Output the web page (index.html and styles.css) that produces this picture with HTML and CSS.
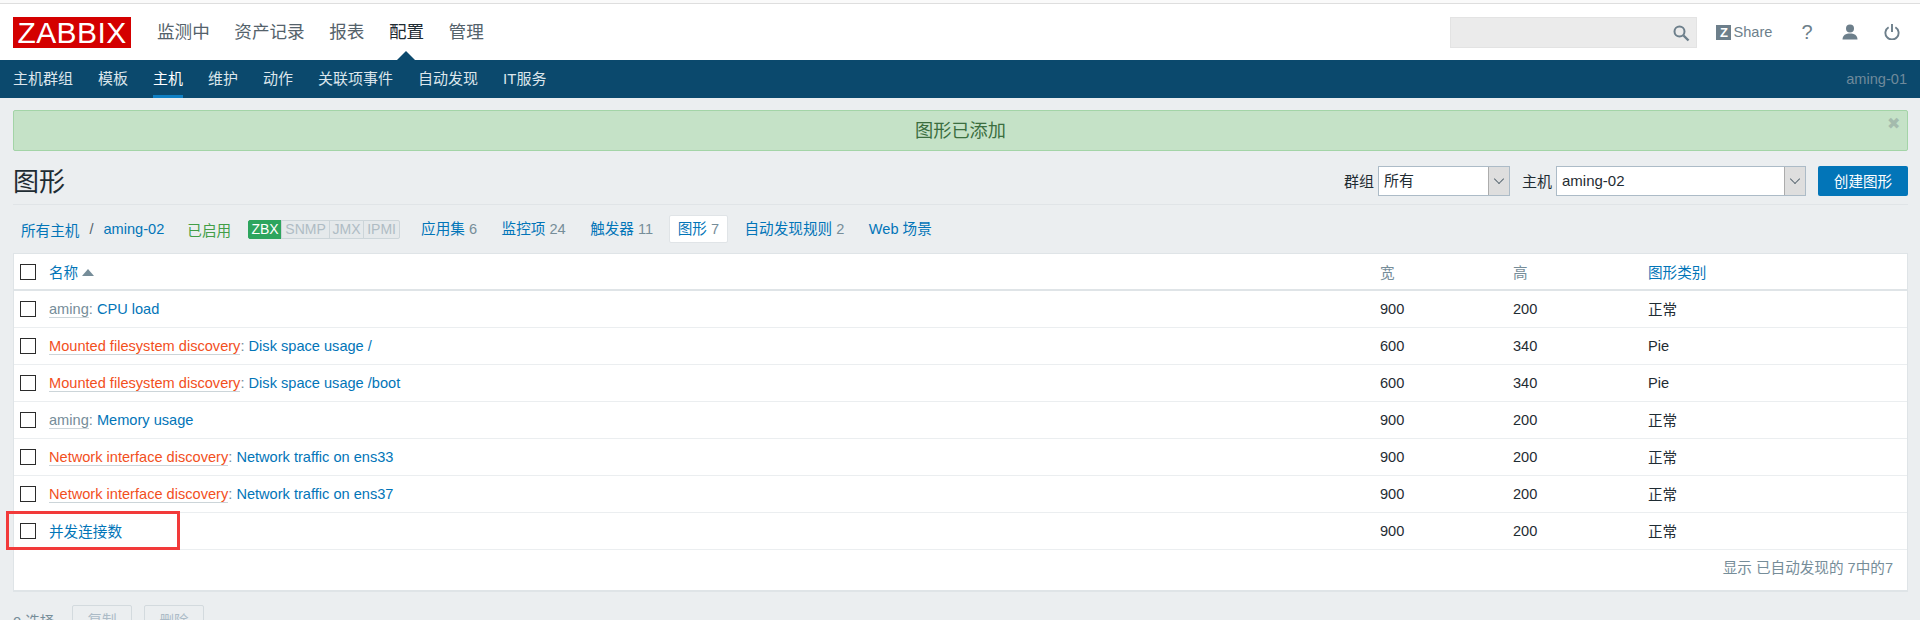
FILE: index.html
```html
<!DOCTYPE html>
<html lang="zh-CN">
<head>
    <meta charset="UTF-8">
    <title>图形</title>
    <link rel="stylesheet" href="styles.css">
</head>
<body>
    <div class="top-strip"></div>

    <!-- Main menu -->
    <header class="header">
        <a href="#" class="logo">ZABBIX</a>
        <nav class="main-nav">
            <a href="#">监测中</a>
            <a href="#">资产记录</a>
            <a href="#">报表</a>
            <a href="#" class="selected">配置</a>
            <a href="#">管理</a>
        </nav>
        <div class="search">
            <svg width="18" height="18" viewBox="0 0 18 18"><circle cx="7.5" cy="7.5" r="5" fill="none" stroke="#6d7f8b" stroke-width="2"/><path d="M11.5 11.5L16.5 16.5" stroke="#6d7f8b" stroke-width="2.4"/></svg>
        </div>
        <a href="#" class="share"><span class="share-z">Z</span>Share</a>
        <a href="#" class="help">?</a>
        <a href="#" class="head-icon">
            <svg width="16" height="16" viewBox="0 0 16 16"><circle cx="8" cy="4.4" r="4" fill="#6d7f8b"/><path d="M0.5 15.5C0.5 11 4 9.4 8 9.4S15.5 11 15.5 15.5Z" fill="#6d7f8b"/></svg>
        </a>
        <a href="#" class="head-icon">
            <svg width="16" height="16" viewBox="0 0 16 16"><path d="M4.6 3.2A6.6 6.6 0 1 0 11.4 3.2" fill="none" stroke="#6d7f8b" stroke-width="1.9"/><path d="M8 0V8" stroke="#6d7f8b" stroke-width="1.9"/></svg>
        </a>
    </header>

    <!-- Sub menu -->
    <nav class="sub-nav">
        <a href="#">主机群组</a>
        <a href="#">模板</a>
        <a href="#" class="selected">主机</a>
        <a href="#">维护</a>
        <a href="#">动作</a>
        <a href="#">关联项事件</a>
        <a href="#">自动发现</a>
        <a href="#">IT服务</a>
        <span class="server-name">aming-01</span>
    </nav>

    <main class="content">
        <div class="msg-good">
            图形已添加
            <span class="msg-close">✖</span>
        </div>

        <div class="title-row">
            <h1>图形</h1>
            <div class="filter">
                <label>群组</label>
                <div class="combo combo-group"><span>所有</span><i class="combo-arrow"></i></div>
                <label>主机</label>
                <div class="combo combo-host"><span>aming-02</span><i class="combo-arrow"></i></div>
                <button class="btn-create">创建图形</button>
            </div>
        </div>

        <!-- Host navigation -->
        <div class="host-nav">
            <a href="#" class="crumb">所有主机</a>
            <span class="crumb-sep">/</span>
            <a href="#" class="crumb">aming-02</a>
            <span class="host-enabled">已启用</span>
            <div class="status-box">
                <span class="on">ZBX</span><span class="s-snmp">SNMP</span><span class="s-jmx">JMX</span><span class="s-ipmi">IPMI</span>
            </div>
            <a href="#" class="host-link">应用集 <em>6</em></a>
            <a href="#" class="host-link">监控项 <em>24</em></a>
            <a href="#" class="host-link">触发器 <em>11</em></a>
            <a href="#" class="host-link current">图形 <em>7</em></a>
            <a href="#" class="host-link">自动发现规则 <em>2</em></a>
            <a href="#" class="host-link">Web 场景</a>
        </div>

        <div class="table-box">
            <table class="list">
                <thead>
                    <tr>
                        <th class="col-check"><i class="check"></i></th>
                        <th class="col-name"><a href="#">名称</a><i class="sort-up"></i></th>
                        <th class="col-w">宽</th>
                        <th class="col-h">高</th>
                        <th><a href="#">图形类别</a></th>
                    </tr>
                </thead>
                <tbody>
                    <tr>
                        <td><i class="check"></i></td>
                        <td><span class="tpl">aming</span><span class="colon">:</span> <a href="#">CPU load</a></td>
                        <td>900</td><td>200</td><td>正常</td>
                    </tr>
                    <tr>
                        <td><i class="check"></i></td>
                        <td><span class="rule">Mounted filesystem discovery</span><span class="colon">:</span> <a href="#">Disk space usage /</a></td>
                        <td>600</td><td>340</td><td>Pie</td>
                    </tr>
                    <tr>
                        <td><i class="check"></i></td>
                        <td><span class="rule">Mounted filesystem discovery</span><span class="colon">:</span> <a href="#">Disk space usage /boot</a></td>
                        <td>600</td><td>340</td><td>Pie</td>
                    </tr>
                    <tr>
                        <td><i class="check"></i></td>
                        <td><span class="tpl">aming</span><span class="colon">:</span> <a href="#">Memory usage</a></td>
                        <td>900</td><td>200</td><td>正常</td>
                    </tr>
                    <tr>
                        <td><i class="check"></i></td>
                        <td><span class="rule">Network interface discovery</span><span class="colon">:</span> <a href="#">Network traffic on ens33</a></td>
                        <td>900</td><td>200</td><td>正常</td>
                    </tr>
                    <tr>
                        <td><i class="check"></i></td>
                        <td><span class="rule">Network interface discovery</span><span class="colon">:</span> <a href="#">Network traffic on ens37</a></td>
                        <td>900</td><td>200</td><td>正常</td>
                    </tr>
                    <tr>
                        <td><i class="check"></i></td>
                        <td><a href="#">并发连接数</a></td>
                        <td>900</td><td>200</td><td>正常</td>
                    </tr>
                </tbody>
            </table>
            <div class="table-stats">显示 已自动发现的 7中的7</div>
        </div>

        <div class="actions">
            <span class="selected-count">0 选择</span>
            <button disabled>复制</button>
            <button disabled>删除</button>
        </div>
    </main>

    <!-- Annotation drawn over the screenshot -->
    <div class="red-mark"></div>
</body>
</html>
```

FILE: styles.css
```css
* {
    margin: 0;
    padding: 0;
    box-sizing: border-box;
}

html, body {
    height: 620px;
    overflow: hidden;
}

body {
    position: relative;
    background: #ebeef0;
    color: #1f2c33;
    font-family: 'Liberation Sans', 'Noto Sans CJK SC', sans-serif;
    font-size: 14.6px;
}

a {
    color: #0275b8;
    text-decoration: none;
}

.top-strip {
    height: 4px;
    background: #fafafa;
    border-bottom: 1px solid #dedede;
}

/* Header */
.header {
    height: 56px;
    background: #ffffff;
    display: flex;
    align-items: center;
    padding: 0 20px 0 13px;
}

.logo {
    width: 118px;
    height: 31px;
    margin-top: 1px;
    background: #d40000;
    color: #ffffff;
    font-size: 30px;
    line-height: 32px;
    letter-spacing: 0.4px;
    text-align: center;
}

.main-nav {
    display: flex;
    gap: 24.5px;
    margin: -4px 0 0 26px;
    flex: 1;
}

.main-nav a {
    position: relative;
    color: #54626b;
    font-size: 17.6px;
}

.main-nav a.selected {
    color: #1f2c33;
}

.main-nav a.selected::after {
    content: '';
    position: absolute;
    left: 50%;
    bottom: -17px;
    margin-left: -9px;
    border-left: 9px solid transparent;
    border-right: 9px solid transparent;
    border-bottom: 9px solid #0b496d;
}

.search {
    width: 247px;
    height: 31px;
    margin-top: 1px;
    background: #ebebeb;
    border: 1px solid #e3e3e3;
    display: flex;
    align-items: center;
    justify-content: flex-end;
    padding-right: 6px;
}

.share {
    display: flex;
    align-items: center;
    gap: 2px;
    margin-left: 19px;
    color: #6d7f8b;
    font-size: 14.6px;
}

.share-z {
    width: 15px;
    height: 15px;
    background: #6d7f8b;
    color: #ffffff;
    font-size: 13px;
    font-weight: bold;
    line-height: 15px;
    text-align: center;
}

.help {
    margin-left: 29px;
    color: #6d7f8b;
    font-size: 20px;
}

.help + .head-icon {
    margin-left: 29.5px;
}

.head-icon {
    display: flex;
}

.head-icon + .head-icon {
    margin-left: 26px;
}

/* Sub menu */
.sub-nav {
    height: 38px;
    background: #0b496d;
    display: flex;
    align-items: center;
    gap: 25px;
    padding: 0 13px;
}

.sub-nav a {
    color: #dce6ec;
    font-size: 15px;
    line-height: 38px;
    height: 38px;
}

.sub-nav a.selected {
    color: #ffffff;
    border-bottom: 3px solid #0f80c4;
}

.server-name {
    margin-left: auto;
    color: #6f8a9b;
}

/* Content */
.content {
    padding: 12px 12px 0 13px;
}

.msg-good {
    position: relative;
    height: 41px;
    background: #c5e2c7;
    border: 1px solid #a3d4a7;
    border-radius: 2px;
    color: #3b6e3f;
    font-size: 18.2px;
    line-height: 40px;
    text-align: center;
}

.msg-close {
    position: absolute;
    top: 0;
    right: 7px;
    color: #a4bbad;
    font-size: 16px;
    line-height: 26px;
}

.title-row {
    height: 54px;
    display: flex;
    align-items: center;
    justify-content: space-between;
    border-bottom: 1px solid #e0e4e7;
    padding-top: 2px;
}

.title-row h1 {
    margin-top: 2px;
    font-size: 26px;
    font-weight: normal;
}

.filter {
    display: flex;
    align-items: center;
    margin-top: 4px;
}

.filter label {
    margin-right: 4px;
    font-size: 15px;
}

.combo {
    height: 30px;
    background: #ffffff;
    border: 1px solid #acbbc7;
    display: flex;
    justify-content: space-between;
    margin-right: 12px;
    font-size: 15px;
    line-height: 28px;
    padding-left: 5px;
}

.combo-group {
    width: 132px;
}

.combo-host {
    width: 250px;
}

.combo-arrow {
    position: relative;
    width: 21px;
    background: #dedede;
    border-left: 1px solid #acacac;
}

.combo-arrow::after {
    content: '';
    position: absolute;
    left: 6px;
    top: 8px;
    width: 7px;
    height: 7px;
    border-right: 1px solid #4f5f6a;
    border-bottom: 1px solid #4f5f6a;
    transform: rotate(45deg) scale(0.9);
}

.btn-create {
    width: 90px;
    height: 30px;
    background: #0275b8;
    border: none;
    border-radius: 2px;
    color: #ffffff;
    font-family: inherit;
    font-size: 14.6px;
}

/* Host navigation */
.host-nav {
    height: 48px;
    display: flex;
    align-items: center;
    padding-left: 8px;
}

.crumb-sep {
    margin: 0 10px;
    color: #54626b;
}

.host-enabled {
    margin-left: 23px;
    color: #429e47;
}

.status-box {
    display: flex;
    height: 19px;
    margin: 0 13px 0 17px;
    font-size: 14px;
    line-height: 17px;
    color: #afbcc4;
    text-align: center;
}

.status-box span {
    background: #e5e9eb;
    border: 1px solid #ccd5d9;
    margin-left: -1px;
}

.status-box .on {
    width: 34px;
    margin-left: 0;
    background: #2da55e;
    border-color: #2da55e;
    border-radius: 2px 0 0 2px;
    color: #ffffff;
}

.status-box .s-snmp { width: 49px; }
.status-box .s-jmx { width: 35px; }
.status-box .s-ipmi { width: 37px; border-radius: 0 2px 2px 0; }

.host-link {
    padding: 0 8px;
    margin-right: 8.5px;
    line-height: 26px;
    border-radius: 2px;
}

.host-link em {
    color: #768d99;
    font-style: normal;
}

.host-link.current {
    background: #ffffff;
    border: 1px solid #e0e4e7;
    margin-left: -1px;
}

/* Table */
.table-box {
    background: #ffffff;
    border: 1px solid #dfe4e7;
    border-bottom-width: 2px;
}

.list {
    width: 100%;
    border-collapse: collapse;
    table-layout: fixed;
}

.list th {
    height: 36px;
    padding: 0 6px;
    border-bottom: 2px solid #dfe4e7;
    color: #768d99;
    font-weight: normal;
    text-align: left;
}

.list td {
    height: 37px;
    padding: 0 6px;
    border-bottom: 1px solid #ebeef0;
}

.col-check { width: 29px; }
.col-w { width: 133px; }
.col-h { width: 135px; }
.list th:last-child { width: 265px; }

.check {
    display: block;
    width: 16px;
    height: 16px;
    background: #ffffff;
    border: 1px solid #2b2b2b;
}

.sort-up {
    display: inline-block;
    margin-left: 4px;
    vertical-align: 2px;
    border-left: 6px solid transparent;
    border-right: 6px solid transparent;
    border-bottom: 7px solid #768d99;
}

.tpl, .rule {
    border-bottom: 1px solid #ccd5d9;
}

.tpl {
    color: #768d99;
}

.rule {
    color: #f24f1d;
}

.colon {
    color: #768d99;
}

.table-stats {
    height: 40px;
    padding-right: 14px;
    color: #768d99;
    line-height: 36px;
    text-align: right;
}

/* Mass actions */
.actions {
    display: flex;
    align-items: flex-start;
    gap: 12px;
    padding-top: 13px;
}

.selected-count {
    width: 47px;
    margin-top: 5px;
    color: #768d99;
}

.actions button {
    width: 60px;
    height: 30px;
    background: #ebeef0;
    border: 1px solid #d3dade;
    border-radius: 2px;
    color: #acbbc7;
    font-family: inherit;
    font-size: 14.6px;
}

/* Red rectangle */
.red-mark {
    position: absolute;
    left: 6px;
    top: 511px;
    width: 174px;
    height: 39px;
    border: 3px solid #f23a3a;
}
```
